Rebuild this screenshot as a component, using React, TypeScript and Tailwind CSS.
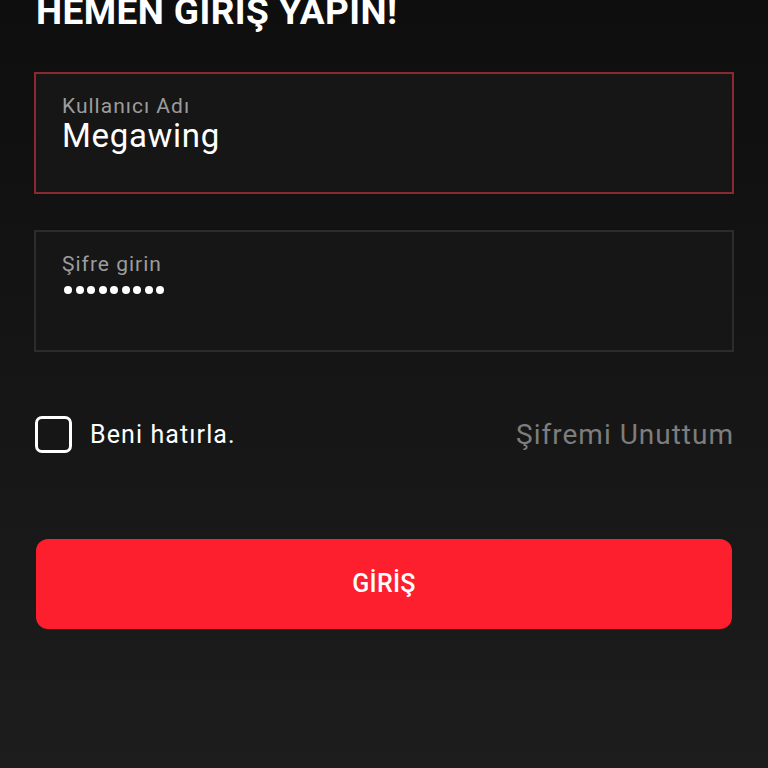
import { useState } from 'react';

export default function App() {
  const [remember, setRemember] = useState(false);

  return (
    <div
      className="w-[768px] h-[768px] overflow-hidden bg-gradient-to-b from-[#0e0e0e] to-[#1d1d1d] text-white"
      style={{ fontFamily: 'Roboto, "Noto Sans", sans-serif' }}
    >
      <div className="px-[34px] pt-0">
        <h1 className="-mt-[8px] ml-[2px] text-[37px] leading-[40px] font-bold tracking-[0.4px]">
          HEMEN GIRIŞ YAPIN!
        </h1>

        {/* username */}
        <div className="mt-[40px] h-[122px] border-2 border-[#8a2a30] bg-[#161616] pl-[26px] pt-[19px]">
          <div className="text-[21px] leading-[26px] tracking-[1px] text-[#9c9c9c]">Kullanıcı Adı</div>
          <div className="text-[33px] leading-[34px] tracking-[0.7px] text-white">Megawing</div>
        </div>

        {/* password */}
        <div className="mt-[36px] h-[122px] border-2 border-[#2c2c2c] bg-[#161616] pl-[26px] pt-[19px]">
          <div className="text-[21px] leading-[26px] tracking-[1px] text-[#9c9c9c]">Şifre girin</div>
          <div className="flex gap-[3.5px] mt-[9px] ml-[2px]">
            {Array.from({ length: 9 }).map((_, i) => (
              <span key={i} className="block w-[8px] h-[8px] rounded-full bg-white" />
            ))}
          </div>
        </div>

        {/* remember / forgot */}
        <div className="mt-[64px] flex items-center justify-between">
          <label className="flex items-center gap-[18px] cursor-pointer">
            <button
              type="button"
              onClick={() => setRemember(!remember)}
              className="ml-[1px] w-[37px] h-[37px] rounded-[7px] border-[3px] border-white"
            />
            <span className="text-[25px] leading-[30px] tracking-[1.1px] text-white">Beni hatırla.</span>
          </label>
          <a className="text-[28px] leading-[30px] tracking-[1px] text-[#7d7d7d]">Şifremi Unuttum</a>
        </div>

        {/* submit */}
        <button
          type="button"
          className="mt-[86px] ml-[2px] w-[696px] h-[90px] rounded-[12px] bg-[#fe1f2e] text-[25px] font-medium tracking-[0.3px] text-white"
        >
          GİRİŞ
        </button>
      </div>
    </div>
  );
}
